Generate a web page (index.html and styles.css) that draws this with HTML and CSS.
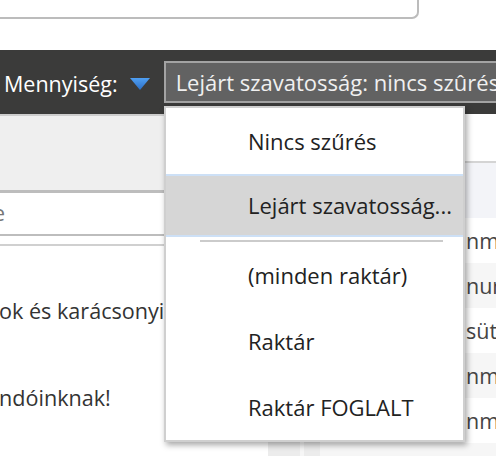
FILE: index.html
```html
<!DOCTYPE html>
<html lang="hu">
<head>
<meta charset="utf-8">
<title>Szűrő</title>
<link rel="stylesheet" href="styles.css">
</head>
<body>
<div class="page">
  <div class="top">
    <div class="memo"></div>
  </div>

  <div class="toolbar">
    <span class="label">Mennyiség:</span>
    <svg class="caret" width="20" height="12" viewBox="0 0 20 12">
      <defs>
        <linearGradient id="cg" x1="0" y1="0" x2="0" y2="1">
          <stop offset="0" stop-color="#4f9ff2"/>
          <stop offset="1" stop-color="#2c6fc6"/>
        </linearGradient>
      </defs>
      <polygon points="0,0 20,0 10,12" fill="url(#cg)"/>
    </svg>
    <div class="select">Lejárt szavatosság: nincs szûrés</div>
  </div>

  <div class="main">
    <div class="left">
      <div class="left-head"></div>
      <div class="search"><span class="ph">e</span></div>
      <div class="rule"></div>
      <div class="content">
        <p>ok és karácsonyi<br>&nbsp;<br>&nbsp;<br>ndóinknak!</p>
      </div>
    </div>
    <div class="right">
      <div class="thead"></div>
      <div class="filter-row"></div>
      <div class="row"><div class="c-a"></div><div class="c-b"></div><div class="c-name"><span class="frag">nmű</span></div></div>
      <div class="row alt"><div class="c-a"></div><div class="c-b"></div><div class="c-name"><span class="frag">nuri</span></div></div>
      <div class="row"><div class="c-a"></div><div class="c-b"></div><div class="c-name"><span class="frag">sütem</span></div></div>
      <div class="row alt"><div class="c-a"></div><div class="c-b"></div><div class="c-name"><span class="frag">nmel</span></div></div>
      <div class="row"><div class="c-a"></div><div class="c-b"></div><div class="c-name"><span class="frag">nmel</span></div></div>
      <div class="row alt"><div class="c-a"></div><div class="c-b"></div><div class="c-name">Megrendelés fa</div></div>
    </div>
  </div>

  <div class="dropdown">
    <div class="opt">Nincs szűrés</div>
    <div class="opt active">Lejárt szavatosság...</div>
    <div class="sep"></div>
    <div class="opt">(minden raktár)</div>
    <div class="opt">Raktár</div>
    <div class="opt">Raktár FOGLALT</div>
  </div>
</div>
</body>
</html>
```

FILE: styles.css
```css
* { box-sizing: border-box; }

html, body {
  margin: 0;
  padding: 0;
  background: #fff;
}

body {
  width: 496px;
  height: 456px;
  overflow: hidden;
  font-family: "Open Sans", "Noto Sans", sans-serif;
}

.page {
  position: relative;
  width: 496px;
  height: 456px;
  overflow: hidden;
}

/* top memo box */
.top {
  height: 50px;
}

.memo {
  margin-left: -20px;
  width: 439px;
  height: 19px;
  border: 2px solid #bcbcbc;
  border-top: none;
  border-radius: 0 0 7px 7px;
}

/* dark toolbar */
.toolbar {
  height: 64px;
  background: #3b3b3a;
  display: flex;
  align-items: center;
  padding-left: 4px;
  white-space: nowrap;
}

.label {
  color: #fff;
  font-size: 21.5px;
  line-height: 1;
  margin-top: 3px;
}

.caret {
  flex: none;
  margin-left: 12px;
  margin-top: 3px;
}

.select {
  flex: none;
  margin-left: 14px;
  height: 42px;
  width: 400px;
  background: #626262;
  border: 2px solid #a3a3a3;
  color: #f0f0f0;
  font-size: 22px;
  line-height: 38px;
  padding-left: 10px;
  white-space: nowrap;
  overflow: hidden;
}

/* main area */
.main {
  display: flex;
}

.left {
  width: 268px;
  flex: none;
}

.left-head {
  height: 76px;
  background: #efefef;
  border-top: 2px solid #cdcdcd;
}

.search {
  height: 46px;
  border-top: 3px solid #bdbdbd;
  border-bottom: 2px solid #bdbdbd;
  background: #fff;
  font-size: 21.5px;
  line-height: 40px;
  color: #777;
  overflow: hidden;
}

.ph {
  margin-left: -7px;
}

.rule {
  height: 6px;
  border-bottom: 2px solid #d0d0d0;
  margin-top: 4px;
}

.content {
  padding-top: 50px;
  color: #333;
  font-size: 21.6px;
  line-height: 29px;
  overflow: hidden;
}

.content p {
  margin: 0 0 0 -1px;
  white-space: nowrap;
}

.right {
  flex: 1;
  min-width: 0;
  font-size: 21.5px;
  color: #444;
}

.thead {
  height: 49px;
  background: #fff;
  border-bottom: 2px solid #d4d4d4;
}

.filter-row {
  height: 55px;
  background: #f3f4f8;
}

.row {
  display: flex;
  height: 45px;
  background: #fff;
}

.row.alt {
  background: #f6f6f6;
}

.c-a {
  width: 32px;
  background: #ececec;
}

.c-b {
  width: 16px;
  margin-left: 4px;
  background: #ececec;
}

.c-name {
  flex: 1;
  padding-left: 2px;
  line-height: 45px;
  white-space: nowrap;
  overflow: hidden;
}

.frag {
  margin-left: 144px;
}

/* dropdown overlay */
.dropdown {
  position: absolute;
  left: 164px;
  top: 106px;
  width: 301px;
  background: #fff;
  border: 2px solid #cfcfcf;
  box-shadow: 2px 3px 6px rgba(0, 0, 0, 0.35);
  font-size: 22px;
  color: #222;
}

.opt {
  height: 66px;
  line-height: 66px;
  padding-left: 82px;
  white-space: nowrap;
}

.opt.active {
  height: 63px;
  line-height: 59px;
  background: #d6d6d6;
  border-top: 2px solid #cde0f6;
  border-bottom: 2px solid #cde0f6;
}

.sep {
  height: 2px;
  margin: 3px 20px 0 34px;
  background: #cbcbcb;
}
```
